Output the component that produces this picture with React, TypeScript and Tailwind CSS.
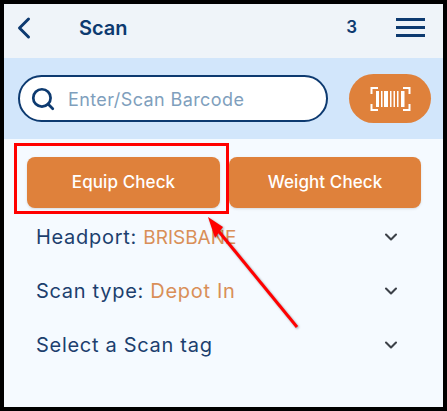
import { ChevronDown, ChevronLeft, Search } from "lucide-react"

const rows = [
  { label: "Headport:", value: "BRISBANE", valueClass: "text-[19px] tracking-normal" },
  { label: "Scan type:", value: "Depot In", valueClass: "" },
  { label: "Select a Scan tag", value: "", valueClass: "" },
]

function BarcodeIcon() {
  return (
    <svg width="41" height="24" viewBox="0 0 41 24" fill="none" stroke="white" strokeWidth="2">
      {/* corners */}
      <path d="M8 1H1.5V7M33 1H39.5V7M1.5 17V23H8M39.5 17V23H33" />
      {/* bars */}
      <g stroke="none" fill="white">
        <rect x="6" y="4" width="3" height="16" />
        <rect x="11" y="4" width="1.5" height="16" />
        <rect x="14" y="4" width="4" height="16" />
        <rect x="20" y="4" width="1.5" height="16" />
        <rect x="23.5" y="4" width="1.5" height="16" />
        <rect x="27" y="4" width="1.5" height="16" />
        <rect x="31" y="4" width="3.5" height="16" />
      </g>
    </svg>
  )
}

export default function App() {
  return (
    <div className="relative w-[447px] h-[411px] bg-[#f5faff] border-4 border-black overflow-hidden font-['Inter',sans-serif]">

      {/* HEADER */}
      <div className="h-[54px] bg-[#eff4f9] flex items-center pl-[2px] pr-[18px] pb-[7px] text-[#0d3a70]">
        <ChevronLeft size={36} strokeWidth={2} />
        <span className="ml-[37px] text-[20px] font-semibold">Scan</span>
        <span className="ml-auto text-[17px] font-semibold">3</span>
        <div className="ml-[39px] w-[29px] flex flex-col gap-[5px]">
          <div className="h-[3px] bg-[#0d3a70]"></div>
          <div className="h-[3px] bg-[#0d3a70]"></div>
          <div className="h-[3px] bg-[#0d3a70]"></div>
        </div>
      </div>

      {/* SEARCH */}
      <div className="h-[81px] bg-[#d2e6fb] flex items-center pl-[14px] pr-[12px] justify-between">
        <div className="w-[310px] h-[47px] bg-white border-2 border-[#0d3a70] rounded-full flex items-center pl-[10px]">
          <Search size={26} strokeWidth={2.5} className="text-[#0d3a70]" />
          <span className="ml-[12px] pt-[2px] text-[18px] text-[#7f9fbd] tracking-[0.4px]">Enter/Scan Barcode</span>
        </div>
        <div className="w-[82px] h-[49px] bg-[#df813b] rounded-full flex items-center justify-center">
          <BarcodeIcon />
        </div>
      </div>

      {/* BUTTONS */}
      <div className="flex gap-[9px] pl-[23px] pt-[18px]">
        <button className="w-[193px] h-[51px] bg-[#df813b] rounded-[8px] text-white text-[17px] tracking-[0.1px] font-medium shadow-sm">
          Equip Check
        </button>
        <button className="w-[192px] h-[51px] bg-[#df813b] rounded-[8px] text-white text-[17px] tracking-[0.1px] font-medium shadow-sm">
          Weight Check
        </button>
      </div>

      {/* ROWS */}
      <div className="pl-[32px] pr-[42px] pt-[2px]">
        {rows.map((r) => (
          <div key={r.label} className="h-[54px] flex items-center justify-between text-[20px] tracking-[0.7px]">
            <span className="text-[#1c3f6e]">
              {r.label} <span className={`text-[#d98f58] ${r.valueClass}`}>{r.value}</span>
            </span>
            <ChevronDown size={20} strokeWidth={2.5} className="text-[#3c4148]" />
          </div>
        ))}
      </div>

      {/* ANNOTATION */}
      <div className="absolute left-[10px] top-[139px] w-[215px] h-[71px] border-[3px] border-[#ff0000]"></div>
      <svg className="absolute left-0 top-0 drop-shadow-[1px_1px_1px_rgba(0,0,0,0.35)]" width="439" height="403" fill="none">
        <path d="M293 323L212 224" stroke="#ff0000" strokeWidth="3" />
        <path d="M204 213L219 223L211 234Z" fill="#ff0000" />
      </svg>
    </div>
  )
}
